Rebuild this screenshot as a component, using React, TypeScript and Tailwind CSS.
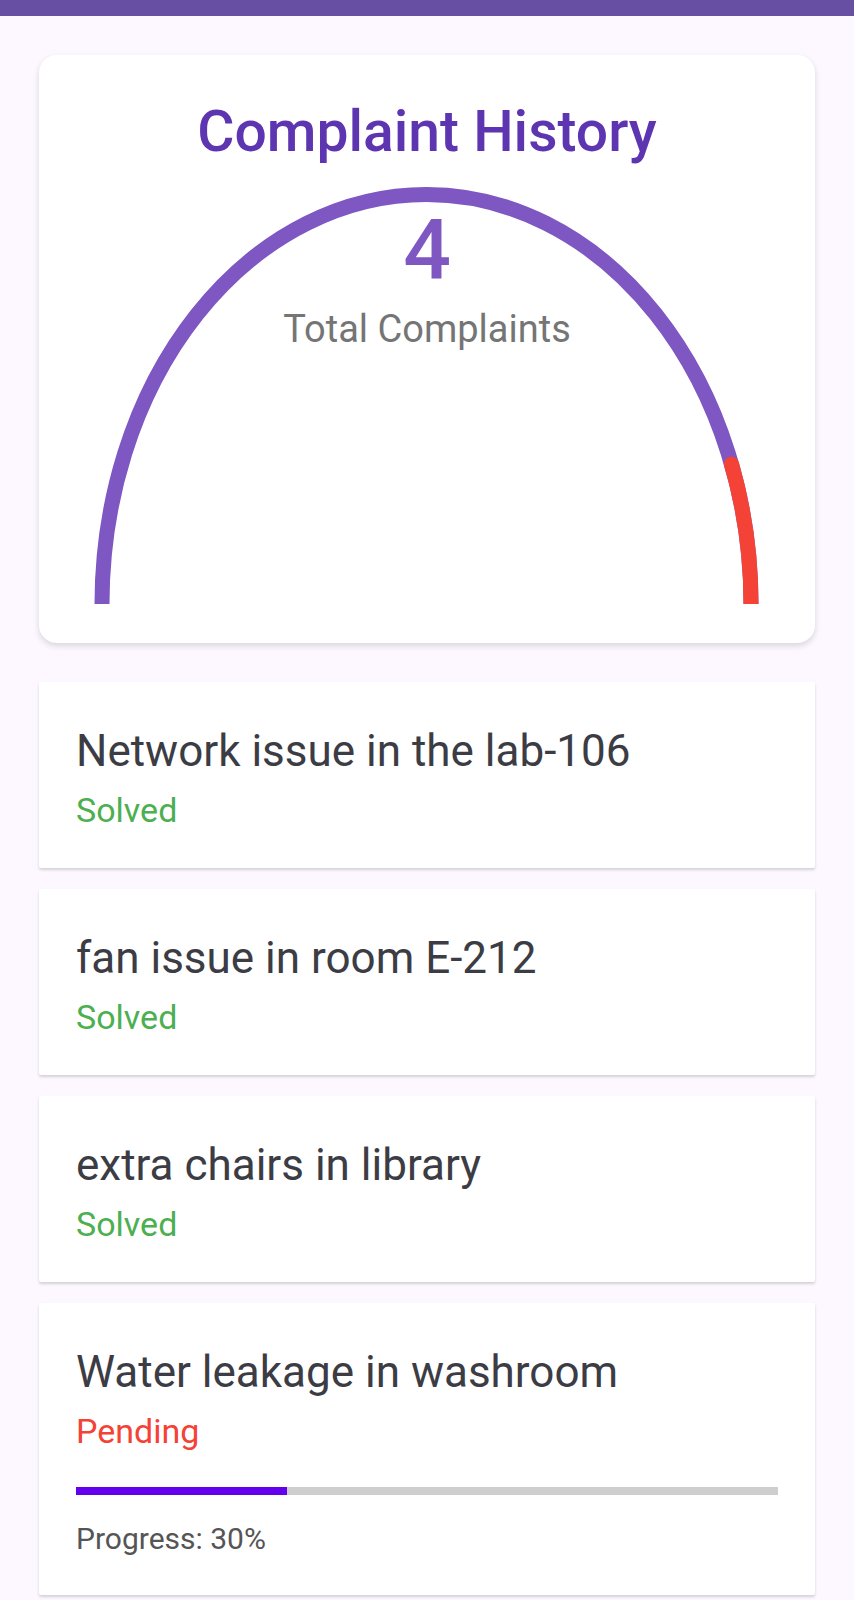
import React from "react";

type Complaint = {
  title: string;
  status: "Solved" | "Pending";
  progress?: number;
};

const complaints: Complaint[] = [
  { title: "Network issue in the lab-106", status: "Solved" },
  { title: "fan issue in room E-212", status: "Solved" },
  { title: "extra chairs in library", status: "Solved" },
  { title: "Water leakage in washroom", status: "Pending", progress: 30 },
];

const Gauge = () => {
  const cx = 387.5;
  const cy = 438;
  const rx = 324.5;
  const ry = 409.5;
  const t = (20 * Math.PI) / 180;
  const sx = cx + rx * Math.cos(t);
  const sy = cy - ry * Math.sin(t);

  return (
    <svg width="776" height="477" viewBox="0 0 776 477" className="block">
      <path
        d={`M ${cx - rx} ${cy} A ${rx} ${ry} 0 0 1 ${cx} ${cy - ry} A ${rx} ${ry} 0 0 1 ${cx + rx} ${cy}`}
        fill="none"
        stroke="#7e57c2"
        strokeWidth="15"
      />
      <path
        d={`M ${sx} ${sy} A ${rx} ${ry} 0 0 1 ${cx + rx} ${cy}`}
        fill="none"
        stroke="#f44336"
        strokeWidth="15"
      />
      <circle cx={sx} cy={sy} r="7.5" fill="#f44336" />
    </svg>
  );
};

const ComplaintCard = ({ item }: { item: Complaint }) => {
  const solved = item.status === "Solved";
  return (
    <div className="bg-white rounded-[2px] shadow-[0_2px_3px_rgba(0,0,0,0.16)] px-[37px] pt-[43px] pb-[38px]">
      <p className="text-[44px] leading-[53px] text-[#3c3c44]">{item.title}</p>
      <p
        className={`mt-[12px] text-[34px] leading-[40px] ${solved ? "text-[#4caf50]" : "text-[#f44336]"}`}
      >
        {item.status}
      </p>
      {item.progress !== undefined && (
        <>
          <div className="mt-[36px] h-[8px] bg-[#cecece]">
            <div
              className="h-full bg-[#6200ee]"
              style={{ width: `${item.progress}%` }}
            />
          </div>
          <p className="mt-[26px] text-[30px] leading-[36px] text-[#555555]">
            Progress: {item.progress}%
          </p>
        </>
      )}
    </div>
  );
};

export default function App() {
  return (
    <div className="min-h-[1600px] bg-[#fdf7ff] font-['Roboto',sans-serif]">
      <div className="h-[16px] bg-[#6750a4]" />

      <div className="px-[39px] pt-[39px] pb-[5px] flex flex-col">
        <div className="bg-white rounded-[18px] shadow-[0_3px_6px_rgba(0,0,0,0.14)] pt-[43px] overflow-hidden">
          <h1 className="text-center text-[57px] leading-[68px] font-medium text-[#5e35b1]">
            Complaint History
          </h1>
          <div className="relative">
            <Gauge />
            <div className="absolute left-0 right-0 top-[42px] flex flex-col items-center">
              <span className="text-[84px] leading-none font-medium text-[#7e57c2]">
                {complaints.length}
              </span>
              <span className="mt-[18px] text-[38px] leading-none text-[#757575]">
                Total Complaints
              </span>
            </div>
          </div>
        </div>

        <div className="mt-[39px] flex flex-col gap-[21px]">
          {complaints.map((c) => (
            <ComplaintCard key={c.title} item={c} />
          ))}
        </div>
      </div>
    </div>
  );
}
